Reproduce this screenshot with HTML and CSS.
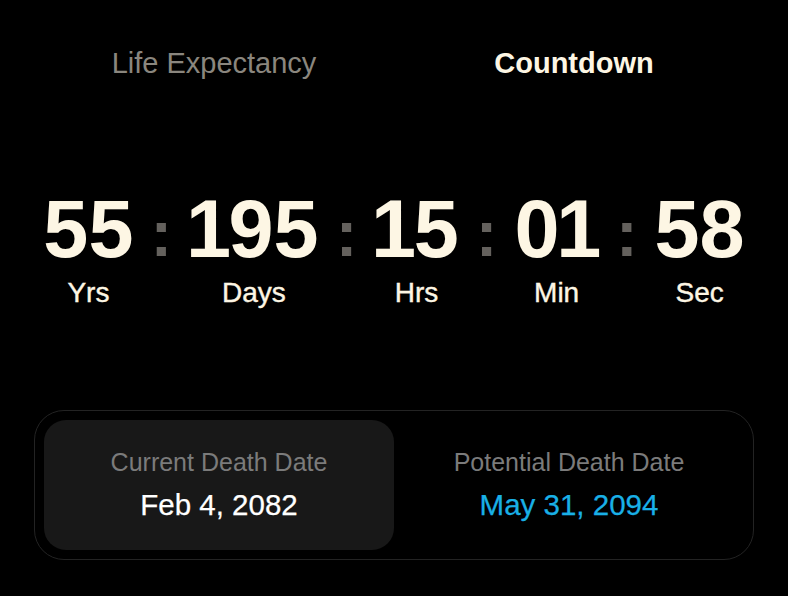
FILE: index.html
```html
<!DOCTYPE html>
<html lang="en">
<head>
<meta charset="utf-8">
<title>Countdown</title>
<link rel="stylesheet" href="styles.css">
</head>
<body>
<div class="page">
  <nav class="tabs">
    <div class="tab">Life Expectancy</div>
    <div class="tab active">Countdown</div>
  </nav>
  <div class="timer">
    <div class="unit"><div class="num">55</div><div class="lbl">Yrs</div></div>
    <div class="colon">:</div>
    <div class="unit"><div class="num"><span class="one">1</span>95</div><div class="lbl">Days</div></div>
    <div class="colon">:</div>
    <div class="unit"><div class="num"><span class="one">1</span>5</div><div class="lbl">Hrs</div></div>
    <div class="colon">:</div>
    <div class="unit"><div class="num">0<span class="one">1</span></div><div class="lbl">Min</div></div>
    <div class="colon">:</div>
    <div class="unit"><div class="num">58</div><div class="lbl">Sec</div></div>
  </div>
  <div class="card">
    <div class="cell selected">
      <div class="cell-label">Current Death Date</div>
      <div class="cell-value">Feb 4, 2082</div>
    </div>
    <div class="cell">
      <div class="cell-label">Potential Death Date</div>
      <div class="cell-value blue">May 31, 2094</div>
    </div>
  </div>
</div>
</body>
</html>
```
FILE: styles.css
```css
* { box-sizing: border-box; }
html, body {
  margin: 0;
  background: #000;
}
body {
  font-family: "Liberation Sans", Arial, sans-serif;
  color: #fdf6e4;
}
.page {
  width: 788px;
  height: 596px;
  overflow: hidden;
}
.tabs {
  width: 720px;
  margin: 0 auto;
  padding-top: 46px;
  display: grid;
  grid-template-columns: 1fr 1fr;
}
.tab {
  text-align: center;
  font-size: 29px;
  line-height: 34px;
  font-weight: 400;
  color: #8a867e;
}
.tab.active {
  color: #fdf6e4;
  font-weight: 700;
}
.timer {
  margin-top: 108px;
  display: flex;
  justify-content: center;
  align-items: flex-start;
  gap: 17px;
}
.unit {
  display: flex;
  flex-direction: column;
  align-items: center;
}
.num {
  font-size: 81px;
  line-height: 82px;
  font-weight: 700;
  color: #fdf6e4;
}
.one {
  margin-left: -0.04em;
  margin-right: -0.03em;
}
.lbl {
  margin-top: 7px;
  font-size: 28px;
  line-height: 32px;
  font-weight: 400;
  -webkit-text-stroke: 0.4px #fdf6e4;
  color: #fdf6e4;
}
.colon {
  font-size: 65px;
  line-height: 82px;
  padding-top: 5px;
  font-weight: 700;
  color: #64615d;
}
.card {
  width: 720px;
  margin: 101px auto 0;
  border: 1.5px solid #232323;
  border-radius: 30px;
  padding: 9px;
  display: grid;
  grid-template-columns: 350px 350px;
}
.cell {
  height: 130px;
  border-radius: 22px;
  display: flex;
  flex-direction: column;
  align-items: center;
  justify-content: center;
  gap: 10px;
}
.cell.selected {
  background: #181818;
}
.cell-label {
  font-size: 25px;
  line-height: 29px;
  color: #7b7b7b;
}
.cell-value {
  font-size: 29.5px;
  line-height: 35px;
  -webkit-text-stroke: 0.25px currentColor;
  color: #ffffff;
}
.cell-value.blue {
  color: #19b0e6;
}
```
